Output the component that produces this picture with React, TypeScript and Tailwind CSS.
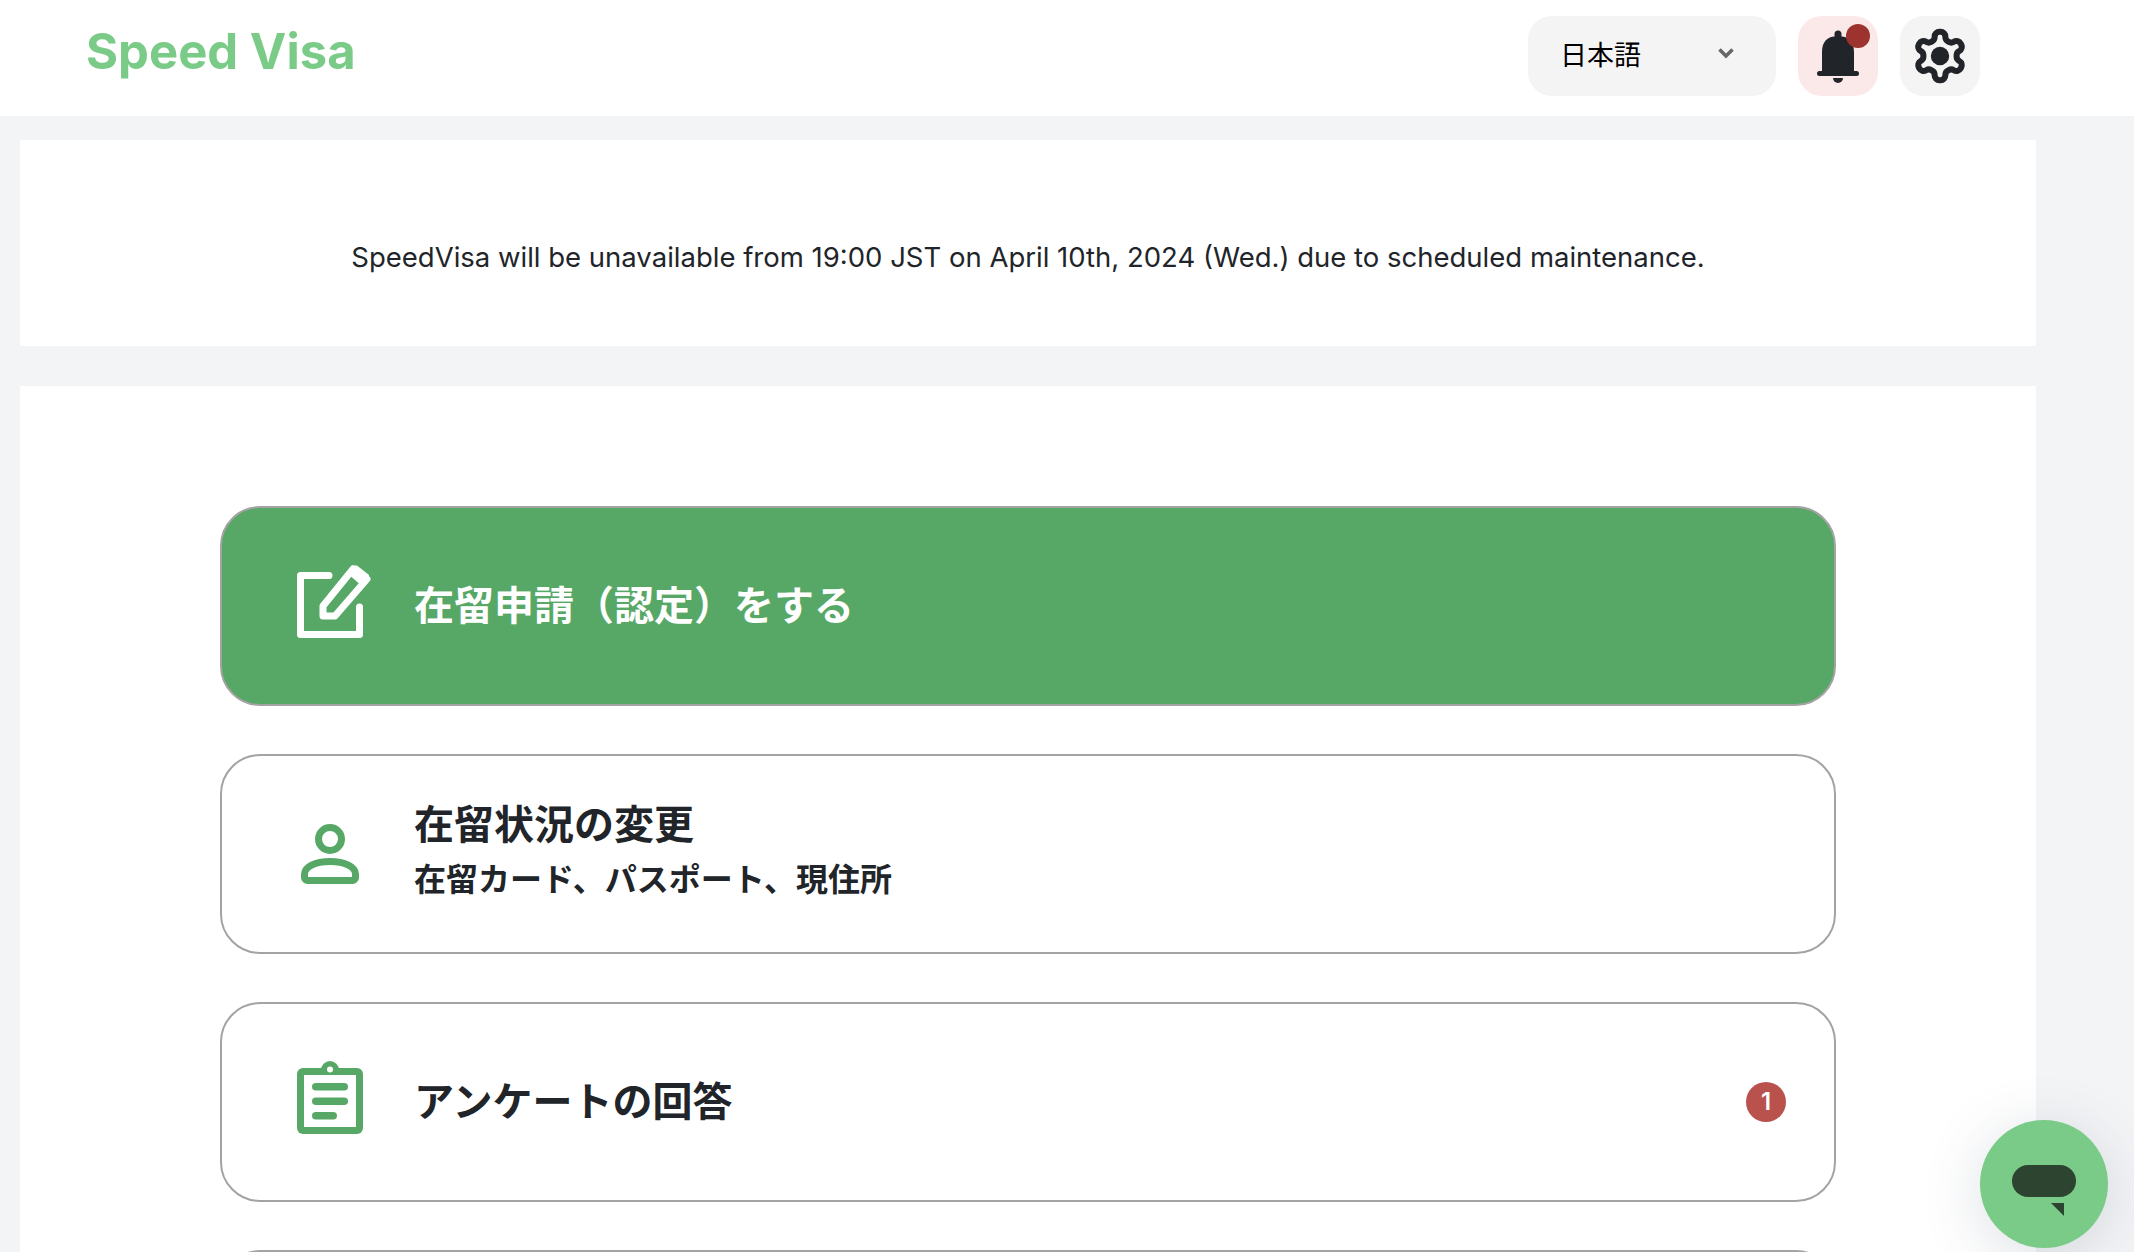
const fontStack = "font-['Inter','Noto_Sans_CJK_JP',sans-serif]";

function EditIcon() {
  return (
    <svg width="74" height="75" viewBox="0 0 74 75" fill="none" stroke="#fff" strokeWidth="7" strokeLinecap="round" strokeLinejoin="round">
      <path d="M32 11.500H3.500V70.500H62.500V43" />
      <path d="M26 42L56 5L70 15L38 52H26Z" strokeWidth="7" />
      <path d="M50 9L56 1.500L60 1.500L72 11L72 16L66 23Z" fill="#fff" stroke="none" />
    </svg>
  );
}

function PersonIcon() {
  return (
    <svg width="58" height="60" viewBox="0 0 58 60" fill="none" stroke="#57a866" strokeWidth="7">
      <circle cx="29" cy="15" r="11.500" />
      <path d="M3.500 50C3.500 43 14 37.500 29 37.500S54.500 43 54.500 50V53.500A3 3 0 0 1 51.500 56.500H6.500A3 3 0 0 1 3.500 53.500Z" strokeLinejoin="round" />
    </svg>
  );
}

function ClipboardIcon() {
  return (
    <svg width="66" height="73" viewBox="0 0 66 73">
      <circle cx="33" cy="9" r="9" fill="#57a866" />
      <rect x="0" y="7" width="66" height="66" rx="6" fill="#57a866" />
      <circle cx="33" cy="8.500" r="3" fill="#fff" />
      <rect x="7" y="14" width="52" height="52" fill="#fff" />
      <rect x="15" y="22" width="36" height="7.500" rx="3.750" fill="#57a866" />
      <rect x="15" y="36.500" width="36" height="7.500" rx="3.750" fill="#57a866" />
      <rect x="15" y="51" width="25" height="7.500" rx="3.750" fill="#57a866" />
    </svg>
  );
}

function BellIcon() {
  return (
    <svg width="42" height="53" viewBox="0 0 42 53" fill="#212529">
      <path d="M17.500 4A3.500 3.500 0 0 1 24.500 4V6.500C31 7 37 11 37 22V41H5V22C5 11 11 7 17.500 6.500Z" />
      <rect x="0" y="41" width="42" height="5" rx="2.500" />
      <path d="M16 48H26A5 5 0 0 1 16 48Z" />
    </svg>
  );
}

function GearIcon() {
  return (
    <svg width="58" height="58" viewBox="0 0 24 24" fill="none" stroke="#212529" strokeWidth="2.500" strokeLinecap="round" strokeLinejoin="round">
      <path d="M12.220 2h-.44a2 2 0 0 0-2 2v.18a2 2 0 0 1-1 1.730l-.43.25a2 2 0 0 1-2 0l-.15-.08a2 2 0 0 0-2.730.73l-.22.38a2 2 0 0 0 .73 2.730l.15.1a2 2 0 0 1 1 1.720v.51a2 2 0 0 1-1 1.740l-.15.09a2 2 0 0 0-.73 2.730l.22.38a2 2 0 0 0 2.730.73l.15-.08a2 2 0 0 1 2 0l.43.25a2 2 0 0 1 1 1.730V20a2 2 0 0 0 2 2h.44a2 2 0 0 0 2-2v-.18a2 2 0 0 1 1-1.730l.43-.25a2 2 0 0 1 2 0l.15.08a2 2 0 0 0 2.730-.73l.22-.39a2 2 0 0 0-.73-2.730l-.15-.08a2 2 0 0 1-1-1.740v-.5a2 2 0 0 1 1-1.740l.15-.09a2 2 0 0 0 .73-2.730l-.22-.38a2 2 0 0 0-2.730-.73l-.15.08a2 2 0 0 1-2 0l-.43-.25a2 2 0 0 1-1-1.730V4a2 2 0 0 0-2-2z" />
      <circle cx="12" cy="12" r="3.800" fill="#212529" stroke="none" />
    </svg>
  );
}

function ChatIcon() {
  return (
    <svg width="64" height="52" viewBox="0 0 64 52" fill="#2c4430">
      <rect x="0" y="0" width="64" height="32" rx="16" />
      <path d="M39 38H52V51Z" />
    </svg>
  );
}

export default function App() {
  return (
    <div className={`h-[1252px] overflow-hidden bg-[#f3f4f6] relative ${fontStack}`}>
      <header className="h-[116px] bg-white flex items-start justify-between pl-[86px] pr-[154px] pt-4">
        <div className="text-[49px] font-bold text-[#7bcb88] mt-[11px] leading-none">Speed Visa</div>
        <div className="flex items-center gap-[22px]">
          <div className="w-[248px] h-20 rounded-3xl bg-[#f4f4f5] flex items-center justify-between pl-8 pr-[42px]">
            <span className="text-[27px] text-black">日本語</span>
            <svg width="16" height="12" viewBox="0 0 16 12" fill="none" stroke="#666" strokeWidth="3.500" className="mb-[6px]">
              <path d="M1.500 2.500L8 9L14.500 2.500" />
            </svg>
          </div>
          <div className="relative w-20 h-20 rounded-3xl bg-[#fbe8e9] flex items-center justify-center">
            <BellIcon />
            <span className="absolute left-[48px] top-2 w-6 h-6 rounded-full bg-[#9c332f]" />
          </div>
          <div className="w-20 h-20 rounded-3xl bg-[#f4f4f5] flex items-center justify-center">
            <GearIcon />
          </div>
        </div>
      </header>

      <main className="pl-5 pr-[98px] pt-6">
        <section className="bg-white h-[206px] flex items-center justify-center pt-[29px]">
          <p className="text-[27.500px] text-[#212529]">
            SpeedVisa will be unavailable from 19:00 JST on April 10th, 2024 (Wed.) due to scheduled maintenance.
          </p>
        </section>

        <section className="bg-white mt-10 px-[200px] pt-[120px] flex flex-col gap-[48px]">
          <button className="h-[200px] shrink-0 rounded-[40px] border-2 border-[#a3a3a3] bg-[#57a866] flex items-center pl-[75px] text-left">
            <span className="w-[117px] shrink-0 -mt-[10px]">
              <EditIcon />
            </span>
            <span className="text-[40px] font-bold text-white">在留申請（認定）をする</span>
          </button>

          <button className="h-[200px] shrink-0 rounded-[40px] border-2 border-[#a3a3a3] bg-white flex items-center pl-[75px] text-left">
            <span className="w-[117px] shrink-0 pl-[4px]">
              <PersonIcon />
            </span>
            <span className="flex flex-col text-[#212529] font-bold">
              <span className="text-[40px] leading-[54px] -mt-[2px]">在留状況の変更</span>
              <span className="text-[32px] leading-[56px]">在留カード、パスポート、現住所</span>
            </span>
          </button>

          <button className="h-[200px] shrink-0 rounded-[40px] border-2 border-[#a3a3a3] bg-white flex items-center pl-[75px] pr-[48px] text-left">
            <span className="w-[117px] shrink-0 -mt-[9px]">
              <ClipboardIcon />
            </span>
            <span className="text-[40px] font-bold text-[#212529] flex-1">アンケートの回答</span>
            <span className="w-10 h-10 rounded-full bg-[#b9514d] text-white text-[24px] font-semibold flex items-center justify-center">1</span>
          </button>

          <div className="h-[200px] shrink-0 rounded-[40px] border-2 border-[#a3a3a3] bg-white" />
        </section>
      </main>

      <div className="absolute left-[1980px] top-[1120px] w-32 h-32 rounded-full bg-[#7bcb88] shadow-[0_10px_60px_rgba(60,80,100,0.18)] flex items-start justify-center pt-[45px]">
        <ChatIcon />
      </div>
    </div>
  );
}
